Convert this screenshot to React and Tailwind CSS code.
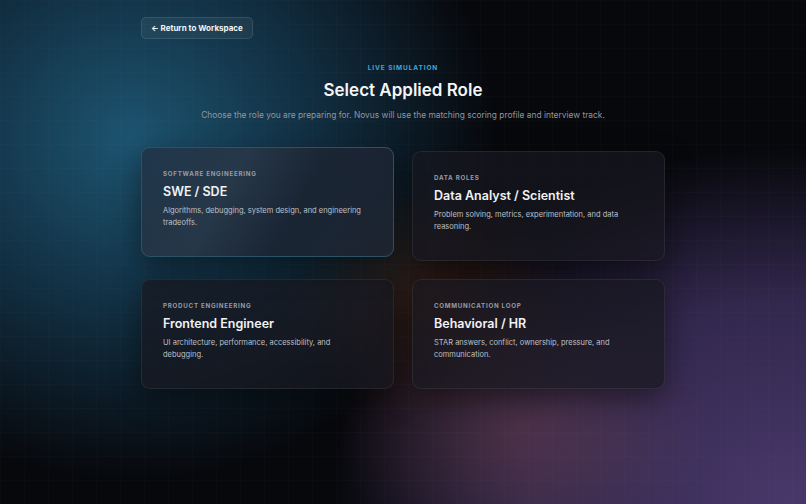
import { useState } from 'react'

const ROLES = [
  {
    id: 'swe',
    eyebrow: 'Software Engineering',
    title: 'SWE / SDE',
    desc: 'Algorithms, debugging, system design, and engineering tradeoffs.'
  },
  {
    id: 'data',
    eyebrow: 'Data Roles',
    title: 'Data Analyst / Scientist',
    desc: 'Problem solving, metrics, experimentation, and data reasoning.'
  },
  {
    id: 'frontend',
    eyebrow: 'Product Engineering',
    title: 'Frontend Engineer',
    desc: 'UI architecture, performance, accessibility, and debugging.'
  },
  {
    id: 'behavioral',
    eyebrow: 'Communication Loop',
    title: 'Behavioral / HR',
    desc: 'STAR answers, conflict, ownership, pressure, and communication.'
  }
]

const RoleCard = ({ role, active, onSelect }) => (
  <div
    role="button"
    onClick={() => onSelect(role.id)}
    className={`flex h-[110px] cursor-pointer flex-col rounded-[9px] border px-[21px] pt-[21px] text-left shadow-[0_10px_30px_rgba(0,0,0,0.45)] transition-all ${
      active
        ? '-translate-y-[4px] border-[#2c5266] bg-[linear-gradient(120deg,rgba(32,48,66,0.8),rgba(42,54,70,0.8)_35%,rgba(28,36,50,0.85)_60%,rgba(30,38,52,0.8))]'
        : 'border-white/[0.07] bg-[rgba(24,24,32,0.72)]'
    }`}
  >
    <div className="text-[6.2px] font-bold uppercase leading-[10px] tracking-[0.12em] text-[#979ba4]">
      {role.eyebrow}
    </div>
    <div className="mt-[5px] text-[12.5px] font-semibold leading-[16px] text-[#f1f2f4]">
      {role.title}
    </div>
    <p className="mt-[5px] text-[7.5px] leading-[11.5px] text-[#bcc0c7]">
      {role.desc}
    </p>
  </div>
)

export default function App() {
  const [selected, setSelected] = useState('swe')

  return (
    <div className="relative h-[504px] w-full overflow-hidden bg-[#07080c] font-['Inter','Liberation_Sans',sans-serif]">
      {/* glows */}
      <div className="pointer-events-none absolute inset-0 bg-[radial-gradient(ellipse_430px_400px_at_130px_140px,rgba(30,88,118,0.95),rgba(22,64,90,0.65)_45%,transparent_85%)]" />
      <div className="pointer-events-none absolute inset-0 bg-[radial-gradient(ellipse_520px_400px_at_790px_500px,rgba(72,56,106,1),rgba(64,50,98,0.75)_50%,transparent_88%)]" />
      <div className="pointer-events-none absolute inset-0 bg-[radial-gradient(ellipse_230px_170px_at_520px_430px,rgba(100,60,74,0.55),transparent_80%)]" />
      <div className="pointer-events-none absolute inset-0 bg-[radial-gradient(ellipse_170px_150px_at_430px_300px,rgba(90,44,22,0.5),transparent_80%)]" />
      {/* grid */}
      <div className="pointer-events-none absolute inset-0 bg-[linear-gradient(rgba(255,255,255,0.012)_1px,transparent_1px),linear-gradient(90deg,rgba(255,255,255,0.012)_1px,transparent_1px)] bg-[size:24px_24px]" />

      <div className="relative mx-auto flex w-[524px] flex-col pt-[17px]">
        <div>
          <button className="flex h-[22px] items-center rounded-[5px] border border-white/10 bg-white/[0.05] px-[9px] text-[8px] font-bold text-[#f3f4f6]">
            ← Return to Workspace
          </button>
        </div>

        <div className="mt-[24px] flex flex-col items-center">
          <div className="text-[6.5px] font-bold uppercase leading-[10px] tracking-[0.14em] text-[#3fa6dc]">
            Live Simulation
          </div>
          <h1 className="mt-[6px] text-[17px] font-semibold leading-[22px] text-[#f4f5f7]">
            Select Applied Role
          </h1>
          <p className="mt-[8px] whitespace-nowrap text-[8.4px] leading-[12px] text-[#9096a0]">
            Choose the role you are preparing for. Novus will use the matching scoring profile and interview track.
          </p>
        </div>

        <div className="mt-[30px] grid grid-cols-2 gap-[18px]">
          {ROLES.map((role) => (
            <RoleCard key={role.id} role={role} active={selected === role.id} onSelect={setSelected} />
          ))}
        </div>
      </div>
    </div>
  )
}
